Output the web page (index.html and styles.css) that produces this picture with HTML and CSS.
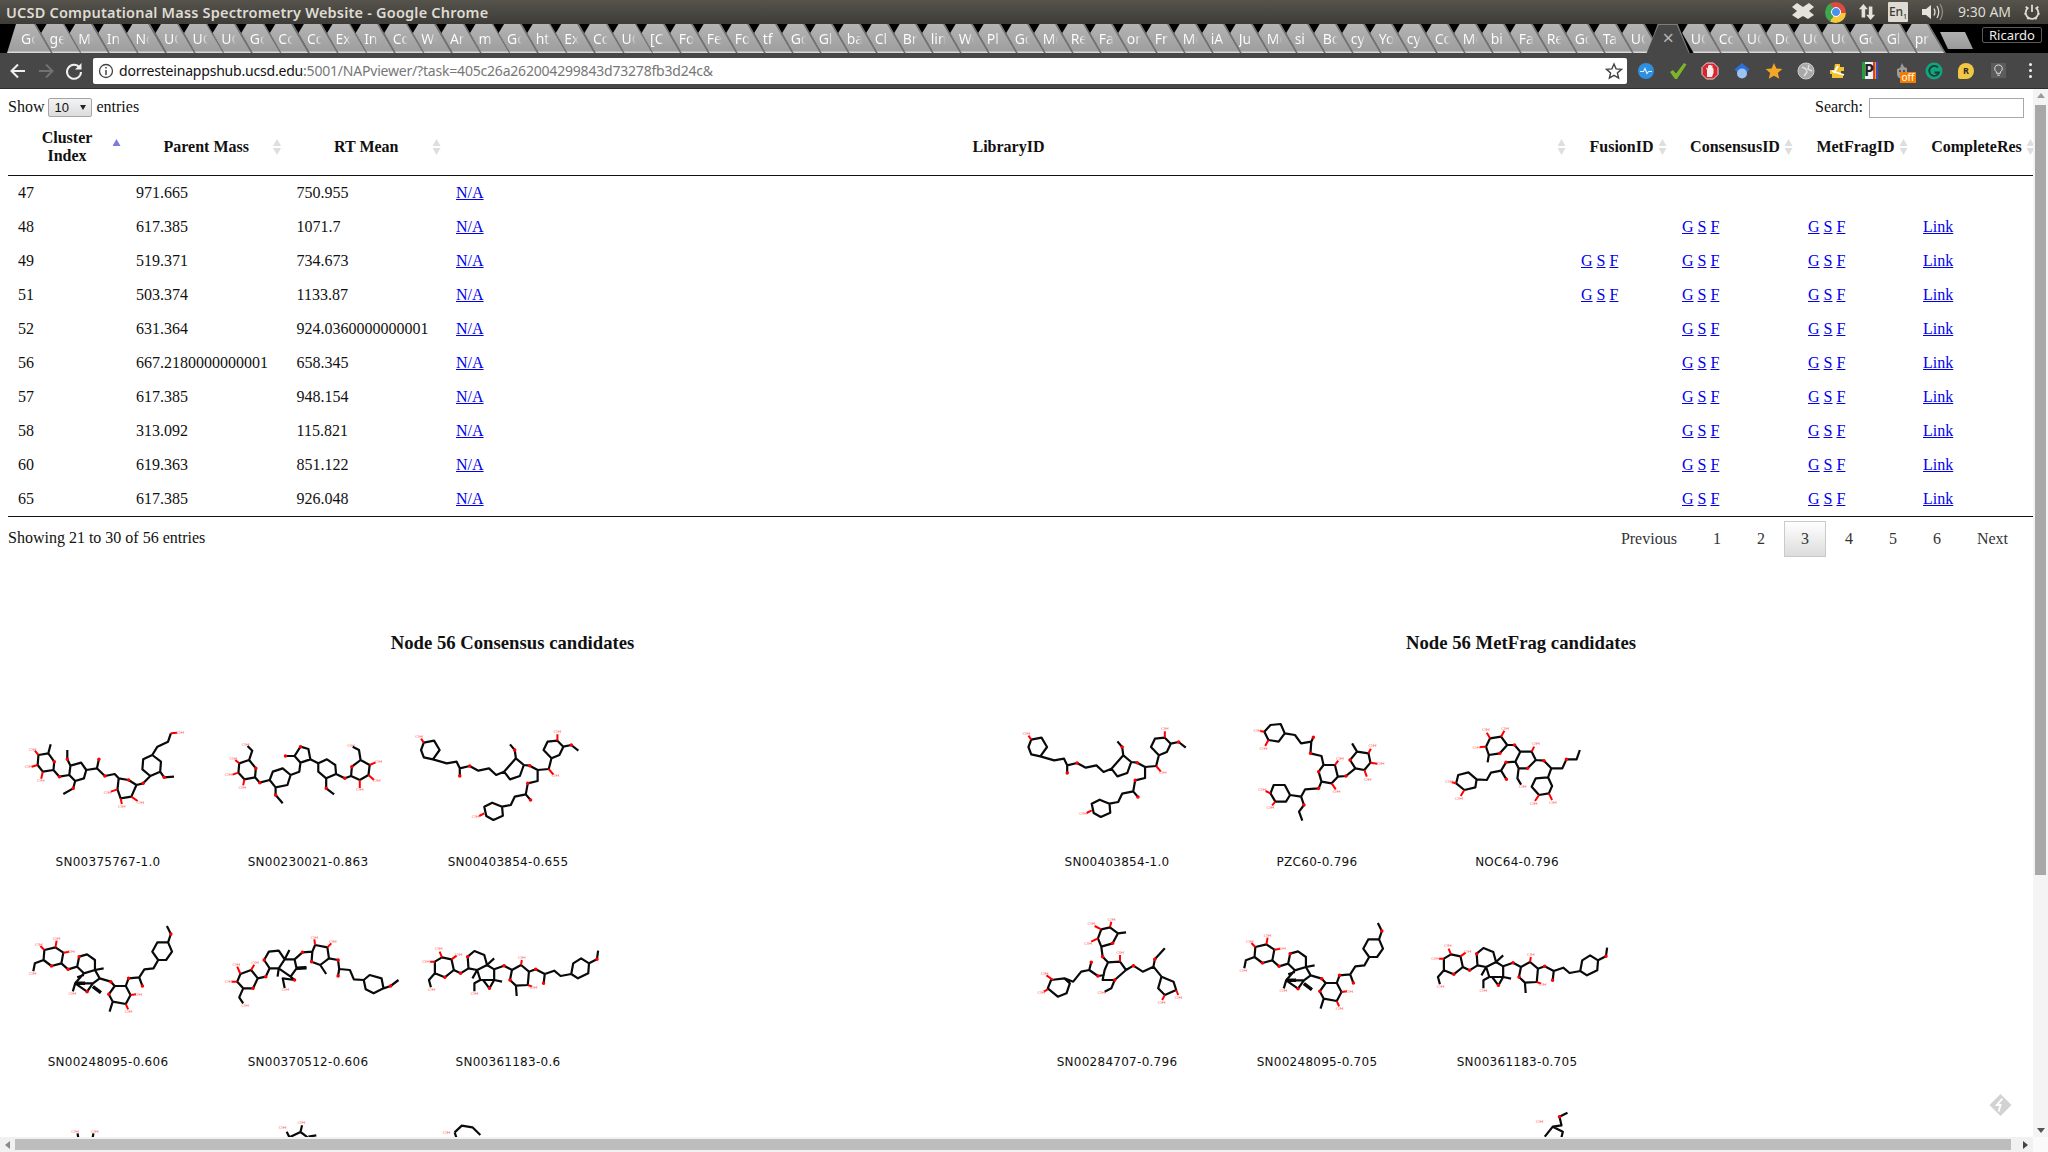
FILE: index.html
```html
<!DOCTYPE html>
<html lang="en">
<head>
<meta charset="utf-8">
<title>UCSD Computational Mass Spectrometry Website</title>
<link rel="stylesheet" href="styles.css">
</head>
<body>
<svg class="defs" aria-hidden="true"><defs>
<g id="mA"><path class="b" d="M97 165L122 160L137 185L135 210L108 215L95 195ZM122 160L128 133M135 210L150 230L175 225L190 243L212 235L218 210L205 188L178 197L175 225M178 197L170 178L170 150M190 243L185 265L160 282M218 210L245 205L250 178M245 205L265 228L290 222L300 235L325 240L345 255L332 290L305 295L297 268L300 235M345 255L362 250L380 228L360 208L362 178L385 165L407 185L405 215L380 228M405 215L415 232L440 230M385 165L398 140L425 125L432 100"/><path class="r" d="M97 165L88 152M95 195L80 200M108 215L104 236M297 268L280 275M305 295L308 312M332 290L348 303M432 100L448 98"/><path class="o" d="M137 185h.1M150 230h.1M170 178h.1M185 265h.1M250 178h.1M265 228h.1M325 240h.1M362 250h.1M415 232h.1"/><text class="oh" x="82" y="148">OH</text><text class="oh" x="72" y="200">OH</text><text class="oh" x="103" y="243">OH</text><text class="oh" x="272" y="277">OH</text><text class="oh" x="308" y="319">OH</text><text class="oh" x="355" y="308">OH</text><text class="oh" x="456" y="97">OH</text></g>
<g id="mB"><path class="b" d="M605 190L630 180L647 205L645 232L618 238L603 218ZM630 180L638 152L626 138M645 232L657 248L682 240L690 215L715 205L735 225L727 255L697 262L682 240M697 262L697 285L715 310M735 225L757 215L760 188L745 168L760 140L780 147L785 178L760 188M745 168L722 168M785 178L805 190L827 178L848 195L850 222L825 235L805 215L805 190M825 235L825 265L845 283M850 222L872 235L888 228L890 200L912 180L935 195L932 225L910 240L888 228M912 180L908 150L892 140"/><path class="r" d="M605 190L595 180M603 218L588 224M618 238L615 256M935 195L950 187M932 225L946 240M910 240L910 264"/><path class="o" d="M647 205h.1M657 248h.1M697 285h.1M760 140h.1M722 168h.1M825 265h.1M872 235h.1M890 200h.1"/><text class="oh" x="621" y="133">OH</text><text class="oh" x="590" y="175">OH</text><text class="oh" x="578" y="225">OH</text><text class="oh" x="613" y="263">OH</text><text class="oh" x="888" y="138">OH</text><text class="oh" x="957" y="185">OH</text><text class="oh" x="953" y="243">OH</text><text class="oh" x="910" y="270">OH</text></g>
<g id="mC"><path class="b" d="M1072 128L1098 122L1112 150L1095 178L1072 172L1065 150ZM1095 178L1130 190L1155 185L1163 205L1163 230M1163 205L1188 198L1210 212L1237 205L1255 225L1275 215L1305 175L1325 195L1315 228L1290 238L1275 215M1305 175L1302 150L1290 133M1325 195L1340 197L1360 210L1388 207L1395 175L1375 150L1385 125L1410 122L1425 140L1415 165L1395 175M1425 140L1445 135L1463 152M1360 210L1360 243L1335 250L1330 283L1342 300M1330 283L1302 290L1292 315L1270 320L1245 308L1225 320L1230 348L1248 360L1272 347L1270 320"/><path class="r" d="M1072 128L1065 116M1410 122L1410 103M1388 207L1400 224M1225 340L1212 348"/><path class="o" d="M1163 228h.1M1188 198h.1M1302 150h.1M1340 197h.1M1445 135h.1M1335 250h.1M1342 300h.1"/><text class="oh" x="1060" y="110">OH</text><text class="oh" x="1410" y="95">OH</text><text class="oh" x="1405" y="228">OH</text><text class="oh" x="1203" y="350">OH</text></g>
<g id="mD"><path class="b" d="M112 150L140 142L160 158L155 190L130 198L110 180ZM110 180L88 190L84 214M155 190L172 208L195 200L200 170L220 163L240 180L240 210L212 220L195 200M240 210L252 235L235 250L190 250L212 220M235 250L220 275L190 250M235 260L255 278M190 250L184 274M212 225L195 232M240 210L262 205M252 235L280 245L290 258L275 283L285 305L318 312L330 285L318 258L290 258M285 305L277 335M318 258L325 235L352 232L360 258M352 232L365 208L388 205L400 180L385 155L398 127L425 127L435 155L420 180L400 180M425 127L432 102L422 78"/><path class="r" d="M112 150L102 138M140 142L143 122M160 158L175 155M318 312L324 328M330 285L344 283"/><path class="o" d="M130 198h.1M172 208h.1M200 170h.1M220 275h.1M280 245h.1M275 283h.1M325 235h.1M360 258h.1M432 102h.1"/><text class="oh" x="98" y="133">OH</text><text class="oh" x="143" y="115">OH</text><text class="oh" x="180" y="155">OH</text><text class="oh" x="82" y="220">OH</text><text class="oh" x="183" y="280">OH</text><text class="oh" x="325" y="335">OH</text><text class="oh" x="350" y="283">OH</text><path class="w" d="M190 250L215 250M235 260L255 278"/></g>
<g id="mE"><path class="b" d="M608 222L635 210L652 235L640 265L615 265L600 245ZM615 265L605 292L615 310M652 235L672 230L682 205L668 180L680 155L705 152L720 178L705 205L682 205M720 178L745 178L750 205L735 230L705 205M720 178L732 150M750 205L775 203M705 205L702 230M735 230L745 240L715 235L720 264M745 178L765 157L790 155L797 135L828 142L832 175L810 195L788 185L790 155M832 175L855 180L858 207L855 228M810 195L825 222M858 207L885 210L895 238L920 240L935 225L965 235L970 265L945 280L925 268L920 240M970 265L988 258L1008 240"/><path class="r" d="M608 222L600 200M635 210L643 194M600 245L586 245M797 135L795 118M828 142L838 130"/><path class="o" d="M640 265h.1M672 230h.1M668 180h.1M745 240h.1M765 157h.1M788 185h.1M855 180h.1M855 228h.1M988 258h.1"/><text class="oh" x="598" y="193">OH</text><text class="oh" x="645" y="187">OH</text><text class="oh" x="578" y="245">OH</text><text class="oh" x="620" y="316">OH</text><text class="oh" x="722" y="270">OH</text><text class="oh" x="795" y="112">OH</text><text class="oh" x="842" y="125">OH</text><path class="w" d="M750 205L775 203"/></g>
<g id="mF"><path class="b" d="M1100 185L1118 172L1142 178L1148 210L1125 232L1100 220ZM1100 220L1085 240L1090 262M1148 210L1165 220L1185 205L1183 170L1200 153L1225 165L1232 195L1207 210L1185 205M1232 195L1250 208L1250 240L1215 240L1207 210M1232 195L1250 175M1207 210L1195 235M1215 240L1200 250L1200 274M1250 240L1238 265L1222 240M1250 240L1270 245M1250 208L1275 197L1295 210L1318 195L1338 215L1335 255L1305 257L1290 240L1295 210M1305 257L1307 288M1338 215L1355 208L1378 222L1375 252M1378 222L1402 212L1418 228L1445 222L1450 190L1470 175L1490 190L1488 220L1462 235L1445 222M1490 190L1510 178L1513 152"/><path class="r" d="M1100 185L1088 185M1118 172L1112 155M1142 178L1155 167M1318 195L1320 180M1335 255L1346 260"/><path class="o" d="M1125 232h.1M1165 220h.1M1183 170h.1M1238 265h.1M1275 197h.1M1290 240h.1M1355 208h.1M1375 250h.1M1510 178h.1"/><text class="oh" x="1078" y="185">OH</text><text class="oh" x="1110" y="147">OH</text><text class="oh" x="1160" y="163">OH</text><text class="oh" x="1092" y="268">OH</text><text class="oh" x="1200" y="280">OH</text><text class="oh" x="1320" y="172">OH</text><text class="oh" x="1350" y="262">OH</text></g>
<g id="mG"><path class="b" d="M660 75L685 72L695 100L680 125L655 120L645 95ZM695 100L720 105L735 130L760 125L765 112M760 125L758 160L785 168L790 195L818 195L825 230L810 250L785 245L778 215L790 195M825 230L845 228L868 205L855 180L872 155L900 160L905 188L890 210L868 205M872 155L860 130M785 245L778 265L745 268L735 290L708 285L695 255L668 255L660 280L672 305L698 305L708 285M735 290L742 315L730 335L738 362"/><path class="r" d="M645 95L634 93M655 120L647 138M818 195L826 182M900 160L906 146M905 188L922 191M890 210L896 230M810 250L820 268M660 280L648 273M672 305L664 316"/><path class="o" d="M758 160h.1M765 112h.1M778 215h.1M845 228h.1M855 180h.1M778 265h.1M742 315h.1"/><text class="oh" x="628" y="92">OH</text><text class="oh" x="643" y="145">OH</text><text class="oh" x="830" y="175">OH</text><text class="oh" x="910" y="138">OH</text><text class="oh" x="930" y="192">OH</text><text class="oh" x="898" y="238">OH</text><text class="oh" x="822" y="275">OH</text><text class="oh" x="640" y="270">OH</text><text class="oh" x="660" y="323">OH</text></g>
<g id="mH"><path class="b" d="M1198 115L1225 110L1240 135L1222 160L1195 165L1188 140ZM1195 165L1192 187M1240 135L1258 135L1272 155L1300 155L1310 180L1290 205L1268 205L1260 185L1272 155M1310 180L1330 182L1348 205L1375 205L1385 178L1410 178L1418 150M1348 205L1340 232L1310 235L1300 260L1318 285L1342 280L1350 258L1340 232M1268 205L1265 235L1274 254M1260 185L1237 187L1225 212L1238 238M1225 212L1200 218L1190 240L1165 238L1145 217L1120 225L1115 250L1135 270L1162 262L1165 238"/><path class="r" d="M1198 115L1190 98M1225 110L1233 92M1188 140L1173 141M1300 155L1306 140M1318 285L1308 303M1342 280L1350 300M1115 250L1104 247M1135 270L1126 288"/><path class="o" d="M1222 160h.1M1258 135h.1M1290 205h.1M1330 182h.1M1385 178h.1M1237 187h.1M1238 238h.1"/><text class="oh" x="1188" y="90">OH</text><text class="oh" x="1235" y="85">OH</text><text class="oh" x="1165" y="142">OH</text><text class="oh" x="1310" y="132">OH</text><text class="oh" x="1305" y="310">OH</text><text class="oh" x="1352" y="307">OH</text><text class="oh" x="1278" y="260">OH</text><text class="oh" x="1098" y="245">OH</text><text class="oh" x="1122" y="295">OH</text></g>
<g id="mI" class="narrow"><path class="b" d="M150 88L163 82L175 100L167 130L150 140L145 115ZM175 100L187 97M150 140L152 170L160 187L178 185L187 210L170 240L152 240L155 210L160 187M187 210L198 197L212 215L228 200L230 178L245 145M228 200L240 230L258 245L262 270L245 285L235 265L240 230M170 240L165 265L155 275M155 225L145 228L132 210L135 187M132 210L120 215L108 245L95 235L75 240L70 265L85 290L98 280L103 250L95 235"/><path class="r" d="M150 88L140 78M163 82L165 65M145 115L135 125M178 185L178 165M262 270L265 285M245 285L241 300M78 240L68 226M70 268L64 275"/><path class="o" d="M167 130h.1M152 170h.1M170 240h.1M198 197h.1M230 178h.1M145 228h.1M135 187h.1"/><text class="oh" x="135" y="72">OH</text><text class="oh" x="165" y="58">OH</text><text class="oh" x="130" y="130">OH</text><text class="oh" x="178" y="158">OH</text><text class="oh" x="150" y="278">OH</text><text class="oh" x="265" y="292">OH</text><text class="oh" x="240" y="308">OH</text><text class="oh" x="65" y="220">OH</text><text class="oh" x="60" y="278">OH</text></g>
</defs></svg>

<div class="window">
  <header class="titlebar">
    <div class="title">UCSD Computational Mass Spectrometry Website - Google Chrome</div>
    <div class="tray">
      <svg class="tray-box t-drop" viewBox="0 0 24 20"><path class="cream" d="M6 1l6 4 6-4 5 4-5 4 5 4-6 4-5-3-5 3-6-4 5-4-5-4z"/></svg>
      <div class="chrome-logo"><span class="chrome-eye"></span></div>
      <svg class="tray-box t-arrows" viewBox="0 0 20 20"><path class="cream" d="M6 1l5 6H8v9H4V7H1zM14 19l5-6h-3V4h-4v9H9z"/></svg>
      <div class="lang">En<sub>1</sub></div>
      <svg class="tray-box t-sound" viewBox="0 0 24 20"><path class="cream" d="M2 7h4l5-4v14l-5-4H2z"/><path class="cream-line" d="M14 6.500q2 3.500 0 7M17 4q3.500 6 0 12"/><path class="dim-line" d="M20 2q5 8 0 16"/></svg>
      <div class="clock">9:30 AM</div>
      <svg class="tray-box t-power" viewBox="0 0 20 20"><path class="cream-line thick" d="M6 5a7 7 0 1 0 8 0M10 2v8M3 4l1.500 1.500M17 4l-1.500 1.500M1.500 12H4M16 12h2.500M5 18l1-1.500M15 18l-1-1.500"/></svg>
    </div>
  </header>

  <nav class="tabstrip">
    <div class="tab"><span>Go</span></div><div class="tab"><span>ge</span></div><div class="tab"><span>Me</span></div><div class="tab"><span>In</span></div><div class="tab"><span>Nc</span></div><div class="tab"><span>UC</span></div><div class="tab"><span>UC</span></div><div class="tab"><span>UC</span></div><div class="tab"><span>Go</span></div><div class="tab"><span>Co</span></div><div class="tab"><span>Co</span></div><div class="tab"><span>Ex</span></div><div class="tab"><span>In</span></div><div class="tab"><span>Co</span></div><div class="tab"><span>Wo</span></div><div class="tab"><span>Ar</span></div><div class="tab"><span>m</span></div><div class="tab"><span>Go</span></div><div class="tab"><span>ht</span></div><div class="tab"><span>Ex</span></div><div class="tab"><span>Co</span></div><div class="tab"><span>UC</span></div><div class="tab"><span>[C</span></div><div class="tab"><span>Fo</span></div><div class="tab"><span>Fe</span></div><div class="tab"><span>Fo</span></div><div class="tab"><span>tf</span></div><div class="tab"><span>Go</span></div><div class="tab"><span>Gl</span></div><div class="tab"><span>ba</span></div><div class="tab"><span>Cl</span></div><div class="tab"><span>Br</span></div><div class="tab"><span>lin</span></div><div class="tab"><span>Wo</span></div><div class="tab"><span>Pl</span></div><div class="tab"><span>Go</span></div><div class="tab"><span>Mo</span></div><div class="tab"><span>Re</span></div><div class="tab"><span>Fa</span></div><div class="tab"><span>or</span></div><div class="tab"><span>Fr</span></div><div class="tab"><span>Mo</span></div><div class="tab"><span>iA</span></div><div class="tab"><span>Ju</span></div><div class="tab"><span>Mo</span></div><div class="tab"><span>si</span></div><div class="tab"><span>Bo</span></div><div class="tab"><span>cy</span></div><div class="tab"><span>Yo</span></div><div class="tab"><span>cy</span></div><div class="tab"><span>Co</span></div><div class="tab"><span>Mo</span></div><div class="tab"><span>bi</span></div><div class="tab"><span>Fa</span></div><div class="tab"><span>Re</span></div><div class="tab"><span>Go</span></div><div class="tab"><span>Ta</span></div><div class="tab"><span>UC</span></div><div class="tab active"><b>×</b></div><div class="tab"><span>UC</span></div><div class="tab"><span>Co</span></div><div class="tab"><span>UC</span></div><div class="tab"><span>Do</span></div><div class="tab"><span>UC</span></div><div class="tab"><span>UC</span></div><div class="tab"><span>Go</span></div><div class="tab"><span>Gl</span></div><div class="tab"><span>pr</span></div>
    <div class="newtab"></div>
    <div class="profile">Ricardo</div>
  </nav>

  <div class="toolbar">
    <svg class="navbtn" viewBox="0 0 20 20"><path class="navline" d="M17 10H4M10 3.500L3.500 10l6.500 6.500"/></svg>
    <svg class="navbtn" viewBox="0 0 20 20"><path class="navline off" d="M3 10h13M10 3.500l6.500 6.500-6.500 6.500"/></svg>
    <svg class="navbtn" viewBox="0 0 20 20"><path class="navline" d="M15.500 6.500A7 7 0 1 0 17 11"/><path class="navfill" d="M17.500 2v6.500H11z"/></svg>
    <div class="omnibox">
      <svg class="info" viewBox="0 0 16 16"><circle class="info-ring" cx="8" cy="8" r="6.500"/><path class="info-i" d="M8 7v5M8 4v1.500"/></svg>
      <span class="url"><span class="host">dorresteinappshub.ucsd.edu</span>:5001/NAPviewer/?task=405c26a262004299843d73278fb3d24c&amp;</span>
      <svg class="star" viewBox="0 0 18 18"><path class="star-path" d="M9 2l2.100 4.900 5.300.5-4 3.500 1.200 5.200L9 13.400l-4.600 2.700 1.200-5.200-4-3.500 5.300-.5z"/></svg>
    </div>
    <div class="exts">
      <div class="ext"><svg viewBox="0 0 18 18"><circle cx="9" cy="9" r="8" fill="#2f8fe0"/><path d="M3 9.500h3.500l1.500-3 2 5 1.500-2H15" fill="none" stroke="#d8ecff" stroke-width="1.200"/></svg></div>
      <div class="ext"><svg viewBox="0 0 18 18"><path d="M1 10l3-2 3 3.500L15 1l2.500 1.500L8 17h-2z" fill="#7db52a"/></svg></div>
      <div class="ext"><svg viewBox="0 0 18 18"><path d="M5.500 1h7L17 5.500v7L12.500 17h-7L1 12.500v-7z" fill="#d9262c" stroke="#f3d6d6"/><path d="M6 15V8l-1-2 1-.5 1 1.500V3.500h1V3h2v.5h1.500V6l1 .5V11l-1.500 4z" fill="#f4eeee"/></svg></div>
      <div class="ext"><svg viewBox="0 0 18 18"><path d="M9 1l7.500 6.500L14 10H4L1.500 7.500z" fill="#2a70d8"/><circle cx="9" cy="11.500" r="5" fill="#9cc3f2"/></svg></div>
      <div class="ext"><svg viewBox="0 0 18 18"><path d="M9 1l2.400 5.400 5.900.6-4.400 3.900 1.300 5.800L9 13.700l-5.200 3 1.300-5.800L.7 7l5.900-.6z" fill="#f5a623"/></svg></div>
      <div class="ext"><svg viewBox="0 0 18 18"><circle cx="9" cy="9" r="8" fill="#a9a9a9"/><circle cx="9" cy="9" r="8" fill="none" stroke="#cfcfcf"/><path d="M5 5l4 2 1 3-3 4M12 3l-1 4 4 2" fill="none" stroke="#dedede" stroke-width="1.500"/></svg></div>
      <div class="ext"><svg viewBox="0 0 18 18"><path d="M6 2h5v3h4v4h-3v4h2v3H3v-4H1V8h4z" fill="#f4c430"/><path d="M3 9l12 4M9 4l-4 7" stroke="#fff" stroke-width="1.800" fill="none"/></svg></div>
      <div class="ext"><div class="rainbow"><span class="pee">P</span></div></div>
      <div class="ext"><svg viewBox="0 0 18 18"><path d="M9 1l2 4 3 1v6a5 5 0 0 1-10 0V7l3-1z" fill="#9b9b9b"/><circle cx="7" cy="9" r="1" fill="#3a3a3a"/><circle cx="11" cy="9" r="1" fill="#3a3a3a"/></svg><span class="badge">off</span></div>
      <div class="ext"><svg viewBox="0 0 18 18"><circle cx="9" cy="9" r="8.500" fill="#14a37f"/><path d="M13 5.500a5 5 0 1 0 1 5H9.500" fill="none" stroke="#123f36" stroke-width="1.800"/></svg></div>
      <div class="ext"><div class="rbubble">R</div></div>
      <div class="ext"><div class="bulb"><svg viewBox="0 0 16 16"><path d="M8 2a4 4 0 0 0-2 7.500V11h4V9.500A4 4 0 0 0 8 2zM6.500 13h3" fill="none" stroke="#e4e4e4"/></svg></div></div>
      <div class="ext"><div class="dots"><i></i><i></i><i></i></div></div>
    </div>
  </div>

  <div class="viewbody">
    <main class="content">
      <div class="page">
        <div class="dt-top">
          <label class="dt-length">Show <span class="sel-wrap"><select class="sel"><option>10</option></select></span> entries</label>
          <label class="dt-search">Search: <input class="search" type="text"></label>
        </div>
        <table class="dt">
          <colgroup><col class="c1"><col class="c2"><col class="c3"><col class="c4"><col class="c5"><col class="c6"><col class="c7"><col class="c8"></colgroup>
          <thead><tr><th class="sorted">Cluster<br>Index</th><th>Parent Mass</th><th>RT Mean</th><th>LibraryID</th><th>FusionID</th><th>ConsensusID</th><th>MetFragID</th><th>CompleteRes</th></tr></thead>
          <tbody>
            <tr><td>47</td><td>971.665</td><td>750.955</td><td><a href="#">N/A</a></td><td></td><td></td><td></td><td></td></tr>
            <tr><td>48</td><td>617.385</td><td>1071.7</td><td><a href="#">N/A</a></td><td></td><td><a href="#">G</a> <a href="#">S</a> <a href="#">F</a></td><td><a href="#">G</a> <a href="#">S</a> <a href="#">F</a></td><td><a href="#">Link</a></td></tr>
            <tr><td>49</td><td>519.371</td><td>734.673</td><td><a href="#">N/A</a></td><td><a href="#">G</a> <a href="#">S</a> <a href="#">F</a></td><td><a href="#">G</a> <a href="#">S</a> <a href="#">F</a></td><td><a href="#">G</a> <a href="#">S</a> <a href="#">F</a></td><td><a href="#">Link</a></td></tr>
            <tr><td>51</td><td>503.374</td><td>1133.87</td><td><a href="#">N/A</a></td><td><a href="#">G</a> <a href="#">S</a> <a href="#">F</a></td><td><a href="#">G</a> <a href="#">S</a> <a href="#">F</a></td><td><a href="#">G</a> <a href="#">S</a> <a href="#">F</a></td><td><a href="#">Link</a></td></tr>
            <tr><td>52</td><td>631.364</td><td>924.0360000000001</td><td><a href="#">N/A</a></td><td></td><td><a href="#">G</a> <a href="#">S</a> <a href="#">F</a></td><td><a href="#">G</a> <a href="#">S</a> <a href="#">F</a></td><td><a href="#">Link</a></td></tr>
            <tr><td>56</td><td>667.2180000000001</td><td>658.345</td><td><a href="#">N/A</a></td><td></td><td><a href="#">G</a> <a href="#">S</a> <a href="#">F</a></td><td><a href="#">G</a> <a href="#">S</a> <a href="#">F</a></td><td><a href="#">Link</a></td></tr>
            <tr><td>57</td><td>617.385</td><td>948.154</td><td><a href="#">N/A</a></td><td></td><td><a href="#">G</a> <a href="#">S</a> <a href="#">F</a></td><td><a href="#">G</a> <a href="#">S</a> <a href="#">F</a></td><td><a href="#">Link</a></td></tr>
            <tr><td>58</td><td>313.092</td><td>115.821</td><td><a href="#">N/A</a></td><td></td><td><a href="#">G</a> <a href="#">S</a> <a href="#">F</a></td><td><a href="#">G</a> <a href="#">S</a> <a href="#">F</a></td><td><a href="#">Link</a></td></tr>
            <tr><td>60</td><td>619.363</td><td>851.122</td><td><a href="#">N/A</a></td><td></td><td><a href="#">G</a> <a href="#">S</a> <a href="#">F</a></td><td><a href="#">G</a> <a href="#">S</a> <a href="#">F</a></td><td><a href="#">Link</a></td></tr>
            <tr><td>65</td><td>617.385</td><td>926.048</td><td><a href="#">N/A</a></td><td></td><td><a href="#">G</a> <a href="#">S</a> <a href="#">F</a></td><td><a href="#">G</a> <a href="#">S</a> <a href="#">F</a></td><td><a href="#">Link</a></td></tr>
          </tbody>
        </table>
        <div class="dt-foot">
          <div class="dt-info">Showing 21 to 30 of 56 entries</div>
          <div class="dt-pages"><span class="pg">Previous</span><span class="pg">1</span><span class="pg">2</span><span class="pg current">3</span><span class="pg">4</span><span class="pg">5</span><span class="pg">6</span><span class="pg">Next</span></div>
        </div>
        <div class="cands">
          <section class="cand">
            <h3 class="cand-title">Node 56 Consensus candidates</h3>
            <div class="mols">
              <figure class="mol"><svg class="mol-art" viewBox="20 0 506 450" preserveAspectRatio="none"><use href="#mA"/></svg><figcaption>SN00375767-1.0</figcaption></figure>
              <figure class="mol"><svg class="mol-art" viewBox="526 0 506 450" preserveAspectRatio="none"><use href="#mB"/></svg><figcaption>SN00230021-0.863</figcaption></figure>
              <figure class="mol"><svg class="mol-art" viewBox="1032 0 506 450" preserveAspectRatio="none"><use href="#mC"/></svg><figcaption>SN00403854-0.655</figcaption></figure>
              <figure class="mol"><svg class="mol-art" viewBox="20 0 506 450" preserveAspectRatio="none"><use href="#mD"/></svg><figcaption>SN00248095-0.606</figcaption></figure>
              <figure class="mol"><svg class="mol-art" viewBox="526 0 506 450" preserveAspectRatio="none"><use href="#mE"/></svg><figcaption>SN00370512-0.606</figcaption></figure>
              <figure class="mol"><svg class="mol-art" viewBox="1032 0 506 450" preserveAspectRatio="none"><use href="#mF"/></svg><figcaption>SN00361183-0.6</figcaption></figure>
              <figure class="mol"><svg class="mol-art" viewBox="20 0 506 450" preserveAspectRatio="none"><path class="b" d="M196 100L200 130M236 100L232 130"/><text class="oh" x="190" y="96">OH</text><text class="oh" x="240" y="94">OH</text></svg></figure>
              <figure class="mol"><svg class="mol-art" viewBox="526 0 506 450" preserveAspectRatio="none"><path class="b" d="M725 95L732 112L760 96L778 112M760 96L764 76M780 110L800 106"/><text class="oh" x="715" y="83">OH</text><text class="oh" x="762" y="67">OH</text></svg></figure>
              <figure class="mol"><svg class="mol-art" viewBox="1032 0 506 450" preserveAspectRatio="none"><path class="b" d="M1150 97L1168 77L1195 82L1215 105M1150 97L1155 115"/><text class="oh" x="1130" y="97">OH</text></svg></figure>
            </div>
          </section>
          <section class="cand">
            <h3 class="cand-title">Node 56 MetFrag candidates</h3>
            <div class="mols">
              <figure class="mol"><svg class="mol-art" viewBox="1036 9 506 450" preserveAspectRatio="none"><use href="#mC"/></svg><figcaption>SN00403854-1.0</figcaption></figure>
              <figure class="mol"><svg class="mol-art" viewBox="529 0 490 450" preserveAspectRatio="none"><use href="#mG"/></svg><figcaption>PZC60-0.796</figcaption></figure>
              <figure class="mol"><svg class="mol-art" viewBox="1019 0 490 450" preserveAspectRatio="none"><use href="#mH"/></svg><figcaption>NOC64-0.796</figcaption></figure>
              <figure class="mol"><svg class="mol-art" viewBox="24 0 299 450" preserveAspectRatio="none"><use href="#mI"/></svg><figcaption>SN00284707-0.796</figcaption></figure>
              <figure class="mol"><svg class="mol-art" viewBox="15 9 506 450" preserveAspectRatio="none"><use href="#mD"/></svg><figcaption>SN00248095-0.705</figcaption></figure>
              <figure class="mol"><svg class="mol-art" viewBox="1032 9 506 450" preserveAspectRatio="none"><use href="#mF"/></svg><figcaption>SN00361183-0.705</figcaption></figure>
              <figure class="mol"><svg class="mol-art narrow" viewBox="24 -600 299 450" preserveAspectRatio="none"><path class="r" d="M124 -195v8"/></svg></figure>
              <figure class="mol"><svg class="mol-art narrow" viewBox="323 -600 299 450" preserveAspectRatio="none"><path class="r" d="M490 -190v6"/></svg></figure>
              <figure class="mol"><svg class="mol-art narrow" viewBox="622 0 299 450" preserveAspectRatio="none"><path class="b" d="M813 110L825 80L838 76L835 50L847 38M825 80L840 95L838 112"/><text class="oh" x="805" y="65">OH</text><path class="o" d="M835 50h.1"/></svg></figure>
            </div>
          </section>
        </div>
      </div>
      <svg class="watermark" viewBox="0 0 24 24"><path d="M12 0l12 12-12 12L0 12z" fill="#d2d2d2"/><path d="M14 5l-6 7h4l-2 7" fill="none" stroke="#fff" stroke-width="2"/></svg>
    </main>
    <div class="vbar"><i class="arrow up"></i><div class="vthumb"></div><i class="arrow down"></i></div>
    <div class="hbar"><div class="hcap"><i class="arrow left"></i></div><div class="hthumb"></div><div class="hcap end"><i class="arrow right"></i></div></div>
    <div class="corner"></div>
  </div>
</div>
</body>
</html>
```
FILE: styles.css
```css
*{box-sizing:border-box}
html,body{margin:0;height:100%;overflow:hidden}
body{font-family:"Liberation Serif",serif;font-size:16px;color:#111;background:#fff}
.defs{position:absolute;width:0;height:0;overflow:hidden}
.window{display:flex;flex-direction:column;height:1152px}

/* title bar */
.titlebar{height:24px;flex:none;display:flex;justify-content:space-between;align-items:center;background:linear-gradient(#56534c,#3d3c38);color:#dfdbd2;padding-left:6px}
.title{font:600 14.500px/24px "Noto Sans",sans-serif;letter-spacing:.2px}
.tray{display:flex;align-items:center;height:24px;position:relative;width:260px}
.tray-box{flex:none;display:block}
.t-drop{width:24px;height:20px;margin-left:3px}
.chrome-logo{flex:none;width:21px;height:21px;margin-left:10px;border-radius:50%;display:flex;align-items:center;justify-content:center;background:conic-gradient(from -30deg,#dd4b3e 0 120deg,#f7c93b 120deg 240deg,#3da64f 240deg 360deg)}
.chrome-eye{width:10px;height:10px;border-radius:50%;background:#4b8ff0;border:1.500px solid #fff}
.t-arrows{width:18px;height:18px;margin-left:12px}
.lang{flex:none;width:20px;height:20px;margin-left:12px;background:#dfdbd2;color:#3c3b37;font:500 12px/20px "Noto Sans",sans-serif;text-align:center;border-radius:1px}
.lang sub{font-size:7px;line-height:0}
.t-sound{width:24px;height:20px;margin-left:12px}
.clock{flex:none;margin-left:14px;font:400 14px/24px "Noto Sans",sans-serif;width:56px;white-space:nowrap}
.t-power{width:18px;height:18px;margin-left:9px}
.cream{fill:#e6e2da}
.cream-line{fill:none;stroke:#dfdbd2;stroke-width:1.300}
.cream-line.thick{stroke-width:2}
.dim-line{fill:none;stroke:#8f8c85;stroke-width:1.300}

/* tab strip */
.tabstrip{height:29px;flex:none;background:#000;display:flex;padding-left:7px;position:relative}
.tab{--p:28px;flex:none;position:relative;height:29px;width:calc(var(--p) + 17px);margin-right:-17px;padding-left:14px;clip-path:polygon(11px 0,var(--p) 0,calc(var(--p) + 17px) 100%,17px 100%,5.500px 9px);background:linear-gradient(#b4b4b4,#9e9e9e 27px,#d8d8d8 28px)}
.tab:nth-child(-n+23){--p:28.6px}
.tab:first-child{clip-path:polygon(9px 0,var(--p) 0,calc(var(--p) + 17px) 100%,0 100%)}
.tab::after{content:"";position:absolute;left:calc(var(--p) - 1.500px);top:0;width:1.500px;height:36px;background:#6e6e6e;transform-origin:0 0;transform:rotate(-30.400deg)}
.tab span{display:inline-block;vertical-align:top;white-space:nowrap;font:400 14px/29px "Noto Sans",sans-serif;color:transparent;background:linear-gradient(90deg,#fff 9px,rgba(255,255,255,0) 15px) no-repeat 0 0/15px 100%;-webkit-background-clip:text;background-clip:text}
.tab.active{--p:32px;width:47px;margin-right:-15px;padding:0;clip-path:polygon(13px 0,33px 0,45px 100%,2px 100%);background:#7c7c7c;text-align:center}
.tab.active::before{content:"";position:absolute;inset:1px 1px 0 1px;background:#474747;clip-path:polygon(13px 0,31px 0,43px 100%,1px 100%)}
.tab.active::after{display:none}
.tab.active b{position:relative;display:block;font:400 20px/27px "Noto Sans",sans-serif;color:#b4b4b4}
.newtab{position:absolute;left:1940px;top:8px;width:33px;height:17px;background:linear-gradient(#b0b0b0,#9a9a9a);clip-path:polygon(0 0,25px 0,33px 100%,8px 100%)}
.profile{position:absolute;left:1982px;top:3px;width:60px;height:16px;border:1px solid #5a5a5a;border-radius:2px;color:#eee;font:400 13px/14px "Noto Sans",sans-serif;text-align:center}

/* toolbar */
.toolbar{height:36px;flex:none;display:flex;align-items:center;background:#474747;border-bottom:1px solid #2e2e2e;padding-left:4px}
.navbtn{flex:none;width:28px;height:20px}
.navline{fill:none;stroke:#f0f0f0;stroke-width:2}
.navline.off{stroke:#727272}
.navfill{fill:#f0f0f0}
.omnibox{flex:none;width:1534px;height:26px;margin-left:5px;background:#fff;border-radius:2px;display:flex;align-items:center;padding-left:5px;padding-right:4px;font:400 14px/26px "Noto Sans",sans-serif;color:#777}
.info{width:16px;height:16px;flex:none}
.info-ring{fill:none;stroke:#444;stroke-width:1.300}
.info-i{fill:none;stroke:#444;stroke-width:1.500}
.url{margin-left:5px;white-space:nowrap;letter-spacing:-.2px}
.host{color:#111}
.star{width:18px;height:18px;margin-left:auto;flex:none}
.star-path{fill:none;stroke:#444;stroke-width:1.400}
.exts{display:flex;margin-left:3px}
.ext{flex:none;width:32px;height:22px;position:relative;display:flex;align-items:center;justify-content:center}
.ext svg{width:18px;height:18px}
.rainbow{width:16px;height:17px;background:linear-gradient(90deg,#17a34a 0 20%,#f2f2f2 20% 70%,#e63b2e 70% 80%,#f39c12 80% 90%,#3b4cc0 90%);display:flex;justify-content:center}
.pee{font:700 16px/17px "Noto Sans",sans-serif;color:#222;margin-right:2px}
.badge{position:absolute;left:14px;top:12px;width:16px;height:11px;background:#f57c00;color:#fff;font:400 10px/11px "Noto Sans",sans-serif;text-align:center}
.rbubble{width:16px;height:16px;border-radius:50% 50% 50% 2px;background:#f2c744;color:#2b2b2b;font:700 9px/16px "Noto Sans",sans-serif;text-align:center}
.bulb{width:15px;height:15px;background:#5c5c5c;display:flex}
.bulb svg{width:15px;height:15px}
.dots{display:flex;flex-direction:column;gap:3px}
.dots i{display:block;width:3px;height:3px;border-radius:50%;background:#f2f2f2}

/* page area */
.viewbody{flex:1;min-height:0;display:grid;grid-template-columns:1fr 15px;grid-template-rows:1fr 15px;position:relative}
.content{overflow:hidden;min-width:0;min-height:0;position:relative}
.page{width:2048px;padding:0 8px}
.dt-top{height:30px;display:flex;justify-content:space-between;align-items:flex-start;padding-top:8px;width:2016px}
.dt-length,.dt-search{display:flex;align-items:center;gap:4px;height:20px;white-space:nowrap}
.sel-wrap{position:relative;display:block;width:44px;height:19px;margin-top:1px}
.sel-wrap::after{content:"";position:absolute;right:6px;top:7px;border:3.500px solid transparent;border-top:5px solid #222;border-bottom:0}
.sel{appearance:none;-webkit-appearance:none;display:block;width:44px;height:19px;border:1px solid #a6a6a6;border-radius:2px;background:linear-gradient(#f4f4f4,#dcdcdc);padding:0 0 0 5px;font:400 13px/17px "Liberation Sans",sans-serif;color:#111}
.dt-search{gap:6px}
.search{width:155px;height:20px;margin-top:2px;border:1px solid #a9a9a9;padding:0;background:#fff}
.dt{width:2032px;table-layout:fixed;border-collapse:collapse;border-bottom:1px solid #111}
.c1{width:118px}.c2{width:160.500px}.c3{width:159.500px}.c4{width:1125px}.c5{width:101px}.c6{width:126px}.c7{width:115px}.c8{width:127px}
.dt th{position:relative;padding:10px 0;line-height:18px;font-weight:700;text-align:center;border-bottom:1px solid #111;white-space:nowrap}
.dt th::before,.dt th::after{content:"";position:absolute;right:5.500px;width:8px;height:7px;background:#dedede}
.dt th::before{top:calc(50% - 8px);clip-path:polygon(50% 0,100% 100%,0 100%)}
.dt th::after{top:calc(50% + 1px);clip-path:polygon(0 0,100% 0,50% 100%)}
.dt th.sorted::before{background:#7c7cdc}
.dt th.sorted::after{display:none}
.dt td{height:34px;padding:8px 10px;line-height:18px;white-space:nowrap}
.dt a{color:#00e;text-decoration:underline}
.dt-foot{display:flex;justify-content:space-between;align-items:flex-start;padding-top:4px;width:2017px}
.dt-info{padding-top:8px;line-height:18px}
.dt-pages{display:flex;gap:2px;line-height:18px;color:#333}
.pg{padding:8px 16px;border:1px solid transparent;height:36px}
.pg.current{background:linear-gradient(#fff,#dcdcdc);border-color:#cacaca;color:#333}
.cands{display:grid;grid-template-columns:1009px 1008px;margin-top:75px}
.cand-title{margin:0 0 46px;font-size:18.720px;line-height:22px;font-weight:700;text-align:center}
.mols{display:grid;grid-template-columns:repeat(3,200px);grid-auto-rows:200px}
.mol{margin:0;width:200px;height:200px;text-align:center}
.mol-art{display:block;width:200px;height:150px;overflow:hidden}
.mol figcaption{font:400 12px/20px "DejaVu Sans",sans-serif;letter-spacing:.27px;color:#111;margin-top:2px}
.b{fill:none;stroke:#0a0a0a;stroke-width:2.200;vector-effect:non-scaling-stroke;stroke-linejoin:round}
.w{fill:none;stroke:#0a0a0a;stroke-width:3.500;vector-effect:non-scaling-stroke}
.r{fill:none;stroke:#f00;stroke-width:2;vector-effect:non-scaling-stroke}
.o{fill:none;stroke:#f00;stroke-width:3.500;stroke-linecap:round;vector-effect:non-scaling-stroke}
.oh{font:400 13px "Liberation Sans",sans-serif;fill:#ff6a6a;text-anchor:middle;dominant-baseline:central}
.narrow .oh{transform-box:fill-box;transform-origin:center;transform:scaleX(.6)}
.watermark{position:absolute;left:1989px;top:1005px;width:23px;height:22px}

/* scrollbars */
.vbar{background:#f4f4f4;display:flex;flex-direction:column;align-items:center;position:relative;padding-top:16px}
.vthumb{width:11px;height:770px;background:#a8a8a8}
.hbar{background:#f1f1f1;display:flex;align-items:center}
.hcap{flex:none;width:15px;height:15px;display:flex;align-items:center;justify-content:center}
.hcap.end{margin-left:auto;width:22px;justify-content:flex-end;padding-right:5px}
.hthumb{width:1996px;height:11px;background:#bdbdbd}
.corner{background:#fafafa}
.arrow{display:block;width:0;height:0;border:4px solid transparent}
.arrow.up{position:absolute;top:4px;left:3.500px;border-top:0;border-bottom:5px solid #9a9a9a}
.arrow.down{position:absolute;bottom:4px;left:3.500px;border-bottom:0;border-top:5px solid #555}
.arrow.left{border-left:0;border-right:5px solid #8a8a8a}
.arrow.right{border-right:0;border-left:5px solid #444}
```
